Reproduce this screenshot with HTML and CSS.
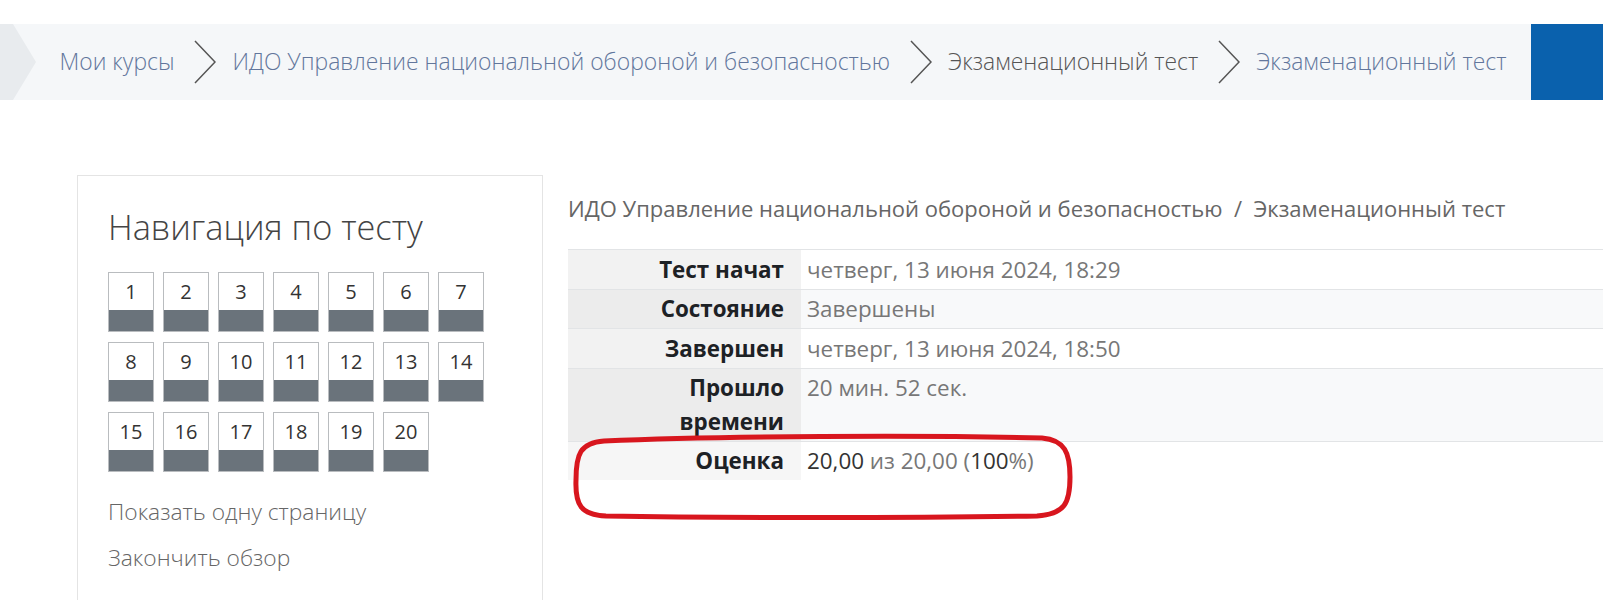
FILE: index.html
```html
<!DOCTYPE html>
<html lang="ru">
<head>
<meta charset="utf-8">
<title>Экзаменационный тест</title>
<link rel="stylesheet" href="styles.css">
</head>
<body>
<nav class="crumbs">
  <span class="tail"></span>
  <a class="crumb link" href="#">Мои курсы</a>
  <svg class="sep" viewBox="0 0 22 44" width="22" height="44"><path d="M1 1 L21 22 L1 43" fill="none" stroke="#555" stroke-width="1.5"/></svg>
  <a class="crumb link" href="#">ИДО Управление национальной обороной и безопасностью</a>
  <svg class="sep" viewBox="0 0 22 44" width="22" height="44"><path d="M1 1 L21 22 L1 43" fill="none" stroke="#555" stroke-width="1.5"/></svg>
  <span class="crumb current">Экзаменационный тест</span>
  <svg class="sep" viewBox="0 0 22 44" width="22" height="44"><path d="M1 1 L21 22 L1 43" fill="none" stroke="#555" stroke-width="1.5"/></svg>
  <a class="crumb link" href="#">Экзаменационный тест</a>
  <span class="fill"></span>
  <span class="blue"></span>
</nav>

<div class="page">
  <aside class="navpanel">
    <h2 class="navtitle">Навигация по тесту</h2>
    <div class="qgrid">
      <a class="qbtn" href="#"><span class="qnum">1</span><span class="qbar"></span></a>
      <a class="qbtn" href="#"><span class="qnum">2</span><span class="qbar"></span></a>
      <a class="qbtn" href="#"><span class="qnum">3</span><span class="qbar"></span></a>
      <a class="qbtn" href="#"><span class="qnum">4</span><span class="qbar"></span></a>
      <a class="qbtn" href="#"><span class="qnum">5</span><span class="qbar"></span></a>
      <a class="qbtn" href="#"><span class="qnum">6</span><span class="qbar"></span></a>
      <a class="qbtn" href="#"><span class="qnum">7</span><span class="qbar"></span></a>
      <a class="qbtn" href="#"><span class="qnum">8</span><span class="qbar"></span></a>
      <a class="qbtn" href="#"><span class="qnum">9</span><span class="qbar"></span></a>
      <a class="qbtn" href="#"><span class="qnum">10</span><span class="qbar"></span></a>
      <a class="qbtn" href="#"><span class="qnum">11</span><span class="qbar"></span></a>
      <a class="qbtn" href="#"><span class="qnum">12</span><span class="qbar"></span></a>
      <a class="qbtn" href="#"><span class="qnum">13</span><span class="qbar"></span></a>
      <a class="qbtn" href="#"><span class="qnum">14</span><span class="qbar"></span></a>
      <a class="qbtn" href="#"><span class="qnum">15</span><span class="qbar"></span></a>
      <a class="qbtn" href="#"><span class="qnum">16</span><span class="qbar"></span></a>
      <a class="qbtn" href="#"><span class="qnum">17</span><span class="qbar"></span></a>
      <a class="qbtn" href="#"><span class="qnum">18</span><span class="qbar"></span></a>
      <a class="qbtn" href="#"><span class="qnum">19</span><span class="qbar"></span></a>
      <a class="qbtn" href="#"><span class="qnum">20</span><span class="qbar"></span></a>
    </div>
    <div class="navlinks">
      <a class="navlink" href="#">Показать одну страницу</a>
      <a class="navlink" href="#">Закончить обзор</a>
    </div>
  </aside>

  <section class="content">
    <div class="pathline">ИДО Управление национальной обороной и безопасностью&nbsp; / &nbsp;Экзаменационный тест</div>
    <div class="tablewrap">
      <table class="summary">
        <tr class="odd"><th>Тест начат</th><td>четверг, 13 июня 2024, 18:29</td></tr>
        <tr class="even"><th>Состояние</th><td>Завершены</td></tr>
        <tr class="odd"><th>Завершен</th><td>четверг, 13 июня 2024, 18:50</td></tr>
        <tr class="even"><th>Прошло времени</th><td>20 мин. 52 сек.</td></tr>
        <tr class="odd last"><th>Оценка</th><td><b>20,00</b> из 20,00 (<b>100</b>%)</td></tr>
      </table>
      <svg class="mark" width="506" height="92" viewBox="0 0 506 92">
        <path d="M34 8 C 150 3, 352 2, 472 5 C 495 7, 500 20, 500 44 C 500 70, 495 81, 467 83 C 342 85, 150 85, 36 83 C 11 82, 5 72, 6 47 C 6 21, 10 10, 34 8 Z" fill="none" stroke="#d8161e" stroke-width="5" stroke-linejoin="round"/>
      </svg>
    </div>
  </section>
</div>
</body>
</html>
```

FILE: styles.css
```css
* { box-sizing: border-box; }
html, body { margin: 0; padding: 0; background: #fff; }
body {
  font-family: "Open Sans", "Noto Sans", "Liberation Sans", sans-serif;
  color: #333;
  overflow: hidden;
  width: 1603px;
  height: 600px;
}
a { text-decoration: none; }

.crumbs {
  margin-top: 24px;
  height: 76px;
  background: #f5f7f9;
  display: flex;
  align-items: center;
}
.tail {
  width: 36px;
  height: 76px;
  background: #e8ebee;
  clip-path: polygon(0 0, 13px 0, 36px 50%, 13px 100%, 0 100%);
  margin-right: 23.5px;
  flex: none;
}
.crumb {
  font-size: 22.9px;
  font-weight: 300;
  white-space: nowrap;
  line-height: 1;
}
.crumb.link { color: #62769c; }
.crumb.current { color: #555; }
.sep { flex: none; margin: 0 16px 0 20px; }
.fill { flex: 1; }
.blue {
  width: 72px;
  height: 76px;
  background: #0a61ad;
  flex: none;
}

.page {
  display: flex;
  gap: 25px;
  padding-left: 77px;
  margin-top: 75px;
}
.navpanel {
  width: 466px;
  flex: none;
  border: 1px solid #e4e4e4;
  border-bottom: 0;
  padding: 30px 31px 0 30px;
  height: 430px;
}
.navtitle {
  margin: 0;
  font-size: 34.3px;
  font-weight: 300;
  line-height: 1.2;
  color: #444;
}
.qgrid {
  margin-top: 25px;
  display: grid;
  grid-template-columns: repeat(7, 46px);
  column-gap: 9px;
  row-gap: 10px;
}
.qbtn {
  display: flex;
  flex-direction: column;
  height: 60px;
  border: 1px solid #b9bcbf;
  background: #fff;
}
.qnum {
  height: 37px;
  display: flex;
  align-items: center;
  justify-content: center;
  font-size: 20px;
  color: #333;
}
.qbar {
  flex: 1;
  background: #6a737b;
}
.navlinks {
  margin-top: 23px;
  display: flex;
  flex-direction: column;
  gap: 12.5px;
}
.navlink {
  font-size: 22.8px;
  font-weight: 300;
  line-height: 33px;
  color: #666;
}

.content {
  flex: 1;
  padding-top: 17px;
  min-width: 0;
}
.pathline {
  font-size: 22px;
  line-height: 33px;
  color: #666;
  white-space: nowrap;
}
.tablewrap {
  position: relative;
  margin-top: 24px;
}
.summary {
  width: 1035px;
  border-collapse: collapse;
  font-size: 22.4px;
  line-height: 33.5px;
}
.summary th {
  width: 233px;
  text-align: right;
  font-weight: 700;
  color: #1d2125;
  padding: 2.5px 17px 2.5px 20px;
  vertical-align: top;
  background: #f2f2f2;
}
.summary td {
  padding: 2.5px 6px;
  color: #777;
  vertical-align: top;
}
.summary tr { border-top: 1px solid #e2e4e6; }
.summary tr.even td { background: #f8f9fa; }
.summary tr.even th { background: #ececec; }
.summary tr.last th { background: #f6f6f6; }
.summary td b { font-weight: 500; color: #333; }
.mark {
  position: absolute;
  left: 2px;
  top: 184px;
}
```
